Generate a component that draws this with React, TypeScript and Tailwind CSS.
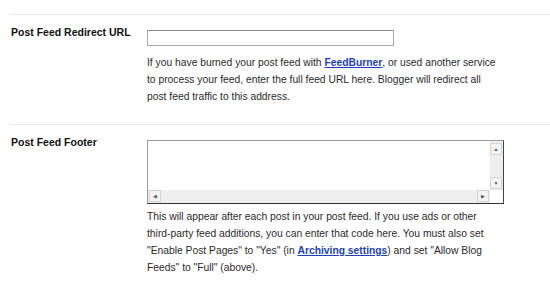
const font = { fontFamily: '"Liberation Sans", Arial, sans-serif' };

function ScrollBtn({ dir }: { dir: "up" | "down" | "left" | "right" }) {
  const glyph = { up: "▲", down: "▼", left: "◀", right: "▶" }[dir];
  return (
    <div className="flex h-[12px] w-[12px] items-center justify-center border border-[#d4d4d4] bg-[#f3f3f3] text-[5px] leading-none text-[#555]">
      {glyph}
    </div>
  );
}

function FakeTextarea() {
  return (
    <div className="flex h-[64px] w-[357px] flex-col border border-[#9a9a9a] border-b-[#333] border-r-[#444] bg-white">
      <div className="flex flex-1">
        <div className="flex-1" />
        <div className="flex w-[13px] flex-col justify-between bg-[#eeeeee] pb-[1px] pt-[2px]">
          <ScrollBtn dir="up" />
          <ScrollBtn dir="down" />
        </div>
      </div>
      <div className="flex h-[13px]">
        <div className="flex flex-1 justify-between bg-[#eeeeee] pl-[1px] pr-[1px]">
          <ScrollBtn dir="left" />
          <ScrollBtn dir="right" />
        </div>
        <div className="w-[13px] bg-white" />
      </div>
    </div>
  );
}

const linkCls = "font-bold text-[#1e3fb8] underline";

export default function App() {
  return (
    <div className="h-[282px] w-[550px] overflow-hidden bg-white pl-[10px] pt-[14px] text-[#2a2a2a]" style={font}>
      <div className="flex border-t border-[#e8e8e8] pb-[19px]">
        <div className="w-[137px] pl-[1px] pt-[10px] text-[10.5px] font-bold text-[#111]">Post Feed Redirect URL</div>
        <div className="flex-1">
          <input type="text" className="mt-[15px] block h-[16px] w-[247px] border border-[#a8a8a8] border-t-[#8a8a8a] bg-white outline-none" />
          <p className="mt-[8px] whitespace-nowrap text-[10.3px] leading-[17px]">
            If you have burned your post feed with <a className={linkCls}>FeedBurner</a>, or used another service
            <br />
            to process your feed, enter the full feed URL here. Blogger will redirect all
            <br />
            post feed traffic to this address.
          </p>
        </div>
      </div>
      <div className="flex border-t border-[#e8e8e8]">
        <div className="w-[137px] pl-[1px] pt-[10px] text-[10.5px] font-bold text-[#111]">Post Feed Footer</div>
        <div className="flex-1">
          <div className="mt-[15px]">
            <FakeTextarea />
          </div>
          <p className="mt-[4px] whitespace-nowrap text-[10.3px] leading-[17px]">
            This will appear after each post in your post feed. If you use ads or other
            <br />
            third-party feed additions, you can enter that code here. You must also set
            <br />
            "Enable Post Pages" to "Yes" (in <a className={linkCls}>Archiving settings</a>) and set "Allow Blog
            <br />
            Feeds" to "Full" (above).
          </p>
        </div>
      </div>
    </div>
  );
}
